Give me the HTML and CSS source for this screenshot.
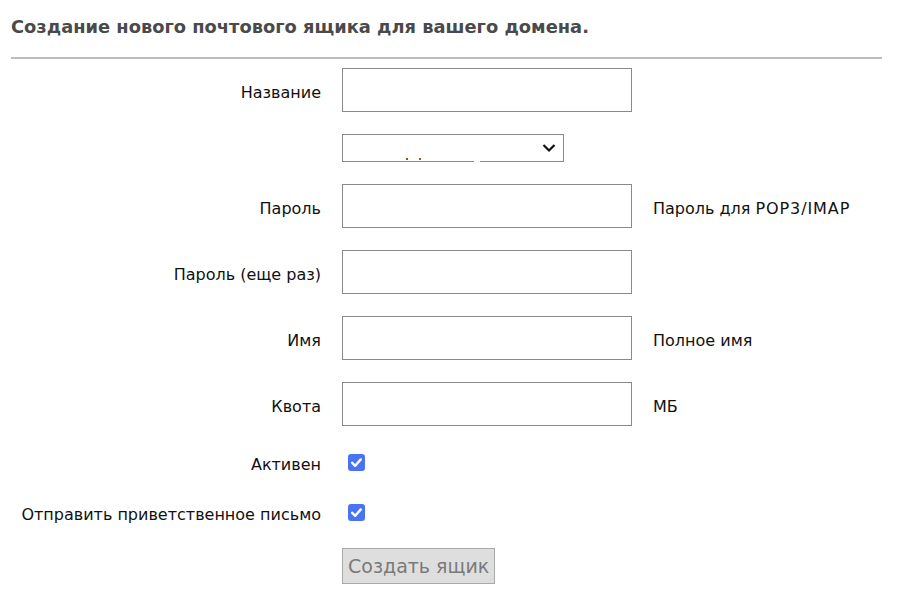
FILE: index.html
```html
<!DOCTYPE html>
<html lang="ru">
<head>
<meta charset="utf-8">
<title>Создание нового почтового ящика</title>
<link rel="stylesheet" href="styles.css">
</head>
<body>
<div class="page">
  <h1 class="title">Создание нового почтового ящика для вашего домена.</h1>
  <hr class="rule">
  <form class="form">
    <label class="lbl" for="name">Название</label>
    <input class="field" id="name" type="text">
    <span class="hint"></span>

    <span class="lbl"></span>
    <div class="select-wrap">
      <select class="domain"><option></option></select>
      <svg class="chev" width="14" height="10" viewBox="0 0 14 10"><path d="M1.5 2 L7 7.5 L12.5 2" fill="none" stroke="#111" stroke-width="2.2"/></svg>
      <span class="dot dot-a"></span><span class="dot dot-b"></span><span class="gap"></span>
    </div>
    <span class="hint"></span>

    <label class="lbl" for="pw">Пароль</label>
    <input class="field" id="pw" type="password">
    <span class="hint">Пароль для <span class="latin">POP3/IMAP</span></span>

    <label class="lbl" for="pw2">Пароль (еще раз)</label>
    <input class="field" id="pw2" type="password">
    <span class="hint"></span>

    <label class="lbl" for="fn">Имя</label>
    <input class="field" id="fn" type="text">
    <span class="hint">Полное имя</span>

    <label class="lbl" for="q">Квота</label>
    <input class="field" id="q" type="text">
    <span class="hint">МБ</span>

    <span class="lbl">Активен</span>
    <div class="cbcell"><span class="check"><svg width="17" height="17" viewBox="0 0 17 17"><path d="M4.2 8.8 L7.2 11.8 L12.8 5.4" fill="none" stroke="#fff" stroke-width="2.4" stroke-linecap="round" stroke-linejoin="round"/></svg></span></div>
    <span class="hint"></span>

    <span class="lbl">Отправить приветственное письмо</span>
    <div class="cbcell"><span class="check"><svg width="17" height="17" viewBox="0 0 17 17"><path d="M4.2 8.8 L7.2 11.8 L12.8 5.4" fill="none" stroke="#fff" stroke-width="2.4" stroke-linecap="round" stroke-linejoin="round"/></svg></span></div>
    <span class="hint"></span>

    <span class="lbl"></span>
    <div class="btncell"><button class="submit" type="button" disabled>Создать ящик</button></div>
    <span class="hint"></span>
  </form>
</div>
</body>
</html>
```

FILE: styles.css
```css
html, body {
  margin: 0;
  padding: 0;
  background: #fff;
}
body {
  font-family: "DejaVu Sans", Verdana, sans-serif;
  color: #111;
}
.page {
  padding: 16px 16px 0 11px;
}
.title {
  margin: 0;
  font-size: 17.85px;
  font-weight: bold;
  color: #4a4a4a;
  line-height: 22px;
}
.rule {
  margin: 19px 0 0 0;
  border: 0;
  height: 2px;
  background: #bdbdbd;
}
.form {
  margin-top: 9px;
  display: grid;
  grid-template-columns: 310px 290px auto;
  column-gap: 21px;
  row-gap: 22px;
  align-items: center;
  font-size: 16px;
}
.lbl {
  text-align: right;
  white-space: nowrap;
  padding-top: 4px;
}
.field {
  box-sizing: border-box;
  width: 290px;
  height: 44px;
  margin: 0;
  border: 1px solid #8a8a8a;
  border-radius: 0;
  background: #fff;
}
.hint {
  white-space: nowrap;
  padding-top: 4px;
}
.latin {
  letter-spacing: 0.9px;
}
.select-wrap {
  position: relative;
  width: 222px;
  height: 28px;
}
.domain {
  appearance: none;
  -webkit-appearance: none;
  box-sizing: border-box;
  width: 222px;
  height: 28px;
  margin: 0;
  border: 1px solid #8a8a8a;
  border-radius: 0;
  background: #fff;
}
.chev {
  position: absolute;
  left: 200px;
  top: 9px;
}
.dot {
  position: absolute;
  width: 2px;
  height: 2px;
  top: 24px;
}
.dot-a { left: 64px; background: #b0402a; }
.dot-b { left: 77px; background: #9a5a20; }
.gap {
  position: absolute;
  left: 132px;
  top: 27px;
  width: 6px;
  height: 1px;
  background: #f4f4f4;
}
.cbcell {
  height: 28px;
  display: flex;
  align-items: center;
  padding-left: 6px;
}
.check {
  display: block;
  width: 17px;
  height: 17px;
  border-radius: 3px;
  background: #4873f3;
}
.check svg {
  display: block;
}
.btncell {
  display: flex;
}
.submit {
  box-sizing: border-box;
  height: 36px;
  padding: 0 5px;
  margin: 0;
  font-family: "DejaVu Sans", Verdana, sans-serif;
  font-size: 19px;
  color: #7a7a7a;
  background: #dedede;
  border: 1px solid #a9a9a9;
  border-radius: 0;
}
```
